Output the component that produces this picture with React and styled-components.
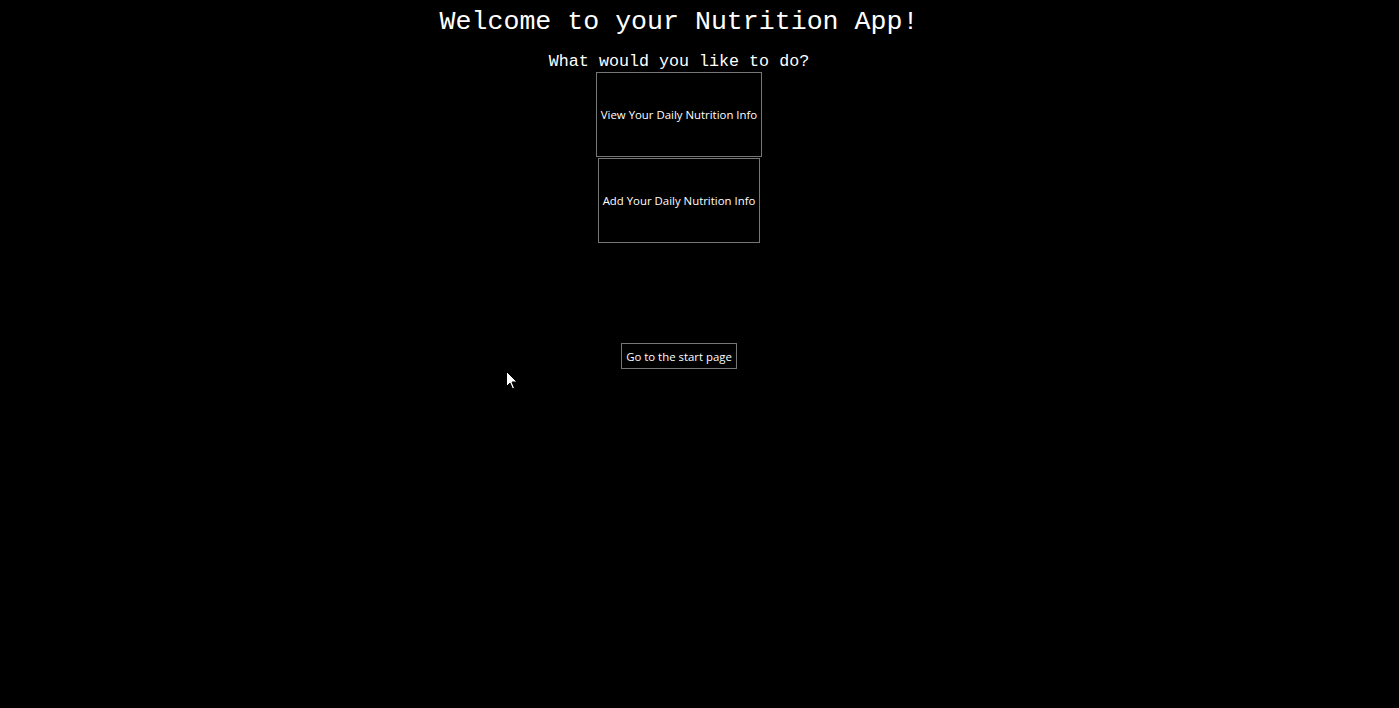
import React from "react";
import styled, { createGlobalStyle } from "styled-components";

const Global = createGlobalStyle`
  html, body { margin: 0; padding: 0; background: #000; }
  body { min-height: 708px; }
`;

const Page = styled.main`
  width: calc(100% - 41px);
  display: flex;
  flex-direction: column;
  align-items: center;
  color: #fff;
`;

const Title = styled.h1`
  margin: 5px 0 0;
  font-family: "Liberation Mono", "Courier New", monospace;
  font-weight: normal;
  font-size: 26.6px;
  line-height: 34px;
`;

const Subtitle = styled.h3`
  margin: 13px 0 0;
  font-family: "Liberation Mono", "Courier New", monospace;
  font-weight: normal;
  font-size: 16.7px;
  line-height: 20px;
`;

const Menu = styled.div`
  display: flex;
  flex-direction: column;
  align-items: center;
  gap: 1px;
`;

const BigButton = styled.button`
  height: 85px;
  padding: 0 4px;
  background: #000;
  color: #fff;
  border: 1px solid #767676;
  font-family: "Open Sans", "Noto Sans", sans-serif;
  font-size: 11.4px;
  cursor: pointer;
`;

const SmallButton = styled.button`
  margin-top: 100px;
  height: 26px;
  padding: 0 4px;
  background: #000;
  color: #fff;
  border: 1px solid #767676;
  font-family: "Open Sans", "Noto Sans", sans-serif;
  font-size: 11.4px;
  cursor: pointer;
`;

const Pointer = styled.svg`
  position: absolute;
  left: 506px;
  top: 371px;
`;

export default function App() {
  return (
    <>
      <Global />
      <Page>
        <Title>Welcome to your Nutrition App!</Title>
        <Subtitle>What would you like to do?</Subtitle>
        <Menu>
          <BigButton>View Your Daily Nutrition Info</BigButton>
          <BigButton>Add Your Daily Nutrition Info</BigButton>
        </Menu>
        <SmallButton>Go to the start page</SmallButton>
      </Page>
      <Pointer width="12" height="19" viewBox="0 0 12 19">
        <path d="M0.5 0.5 L0.5 15.5 L4 12 L6.5 18 L8.5 17 L6 11 L11 11 Z" fill="#fff" stroke="#000" strokeWidth="1" />
      </Pointer>
    </>
  );
}
